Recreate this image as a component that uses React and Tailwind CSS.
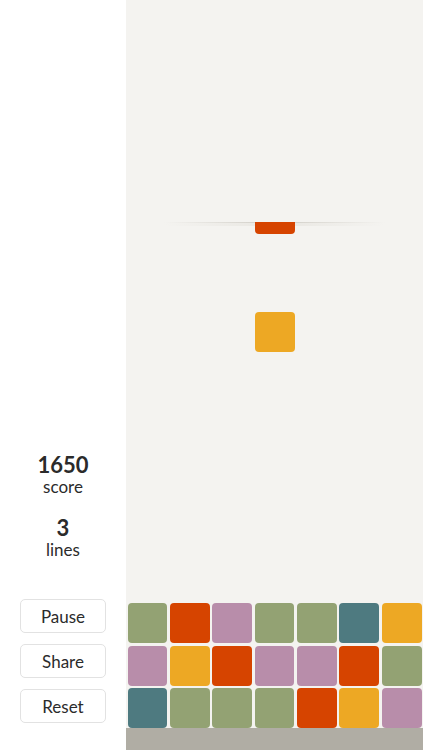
const ROWS = [
  ['g', 'o', 'p', 'g', 'g', 't', 'y'],
  ['p', 'y', 'o', 'p', 'p', 'o', 'g'],
  ['t', 'g', 'g', 'g', 'o', 'y', 'p'],
];

const COLORS = {
  g: 'bg-[#93a273]',
  o: 'bg-[#d64400]',
  p: 'bg-[#b88daa]',
  t: 'bg-[#4e7a80]',
  y: 'bg-[#eda824]',
};

function Block({ c, className = '' }) {
  return <div className={`h-[40px] rounded-[4px] ${COLORS[c]} ${className}`} />;
}

export default function App() {
  return (
    <div
      className="flex h-[750px] w-[423px] overflow-hidden bg-white text-[#2b2b2b]"
      style={{ fontFamily: 'Lato, "Noto Sans", sans-serif' }}
    >
      {/* side panel */}
      <div className="flex w-[126px] shrink-0 flex-col items-center justify-end pb-[27px]">
        <div className="flex flex-col items-center">
          <div className="text-[22px] font-bold leading-[24px]">1650</div>
          <div className="text-[17px] leading-[20px]">score</div>
          <div className="mt-[19px] text-[22px] font-bold leading-[24px]">3</div>
          <div className="text-[17px] leading-[20px]">lines</div>
        </div>
        <div className="mt-[39px] flex flex-col gap-[11px]">
          {['Pause', 'Share', 'Reset'].map((label) => (
            <button
              key={label}
              className="h-[34px] w-[86px] rounded-[5px] border border-[#e2e2e2] bg-white text-[17px] leading-none text-[#2b2b2b]"
            >
              {label}
            </button>
          ))}
        </div>
      </div>

      {/* board */}
      <div className="flex flex-1 flex-col bg-[#f4f3f0]">
        <div className="h-[222px] shrink-0" />
        <div className="relative flex flex-1 flex-col justify-end overflow-hidden">
          <div className="absolute left-[38px] right-[38px] top-0 h-[1px] bg-linear-to-r from-transparent via-[#cfccc5] to-transparent" />
          <div className="absolute left-[38px] right-[38px] top-[1px] h-[3px] bg-linear-to-r from-transparent via-[#e9e7e2] to-transparent" />
          <div className="absolute left-[129px] top-[-28px] h-[40px] w-[40px] rounded-[4px] bg-[#d64400]" />
          <div className="absolute left-[129px] top-[90px] h-[40px] w-[40px] rounded-[4px] bg-[#eda824]" />
          <div className="grid grid-cols-7 gap-[2.4px] px-[1.5px]">
            {ROWS.flat().map((c, i) => (
              <Block key={i} c={c} />
            ))}
          </div>
        </div>
        <div className="h-[22px] shrink-0 bg-[#b0ada4]" />
      </div>
    </div>
  );
}
